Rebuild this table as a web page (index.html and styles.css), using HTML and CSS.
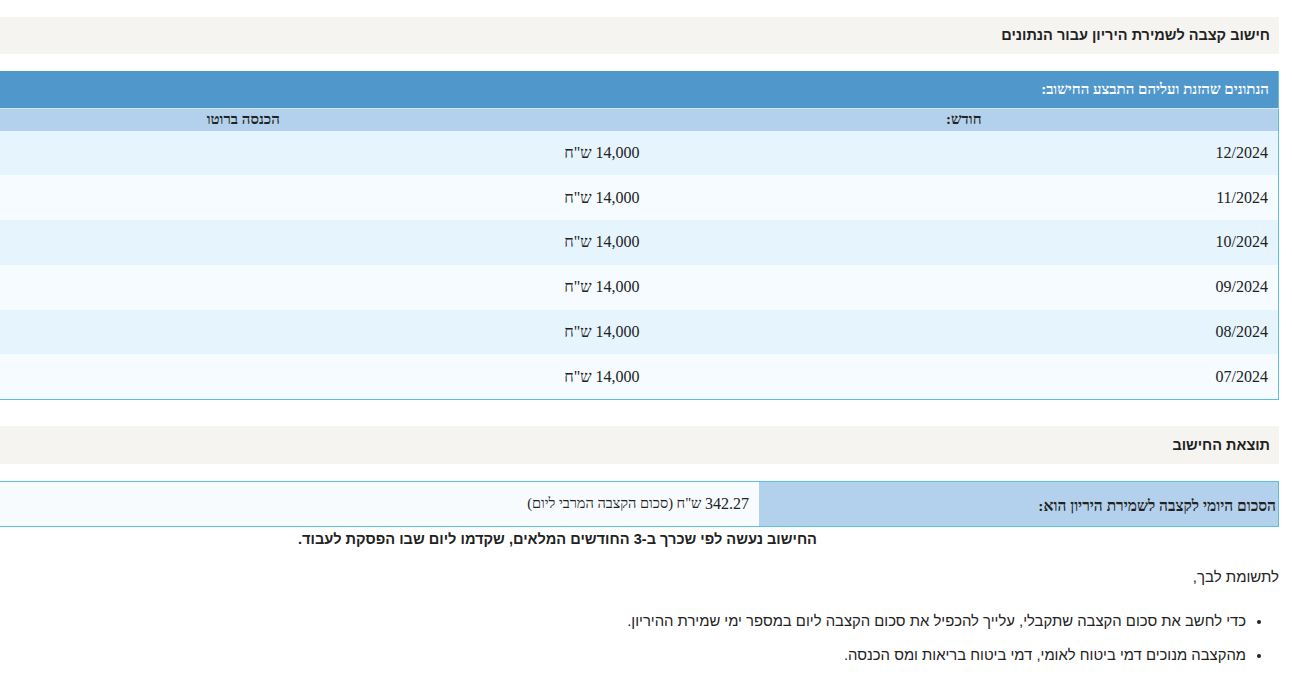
FILE: index.html
```html
<!DOCTYPE html>
<html lang="he" dir="rtl">
<head>
<meta charset="utf-8">
<title>חישוב קצבה לשמירת היריון</title>
<link rel="stylesheet" href="styles.css">
</head>
<body>
<div class="page">
  <h2 class="section-bar">חישוב קצבה לשמירת היריון עבור הנתונים</h2>

  <table class="data-table">
    <colgroup>
      <col class="col-month">
      <col class="col-income">
    </colgroup>
    <thead>
      <tr class="caption-row"><th colspan="2">הנתונים שהזנת ועליהם התבצע החישוב:</th></tr>
      <tr class="head-row"><th>חודש:</th><th>הכנסה ברוטו</th></tr>
    </thead>
    <tbody>
      <tr class="odd"><td>12/2024</td><td>14,000 ש"ח</td></tr>
      <tr class="even"><td>11/2024</td><td>14,000 ש"ח</td></tr>
      <tr class="odd"><td>10/2024</td><td>14,000 ש"ח</td></tr>
      <tr class="even"><td>09/2024</td><td>14,000 ש"ח</td></tr>
      <tr class="odd"><td>08/2024</td><td>14,000 ש"ח</td></tr>
      <tr class="even"><td>07/2024</td><td>14,000 ש"ח</td></tr>
    </tbody>
  </table>

  <h2 class="section-bar result-bar">תוצאת החישוב</h2>

  <div class="result-row">
    <div class="result-label">הסכום היומי לקצבה לשמירת היריון הוא:</div>
    <div class="result-value"><span class="amount">342.27</span>&nbsp;ש"ח (סכום הקצבה המרבי ליום)</div>
  </div>

  <p class="note">החישוב נעשה לפי שכרך ב-3 החודשים המלאים, שקדמו ליום שבו הפסקת לעבוד.</p>

  <div class="attention">
    <p class="attention-title">לתשומת לבך,</p>
    <ul class="attention-list">
      <li>כדי לחשב את סכום הקצבה שתקבלי, עלייך להכפיל את סכום הקצבה ליום במספר ימי שמירת ההיריון.</li>
      <li>מהקצבה מנוכים דמי ביטוח לאומי, דמי ביטוח בריאות ומס הכנסה.</li>
    </ul>
  </div>
</div>
</body>
</html>
```

FILE: styles.css
```css
html, body {
  margin: 0;
  padding: 0;
  background: #ffffff;
}

body {
  direction: rtl;
  font-family: "Liberation Sans", Arial, sans-serif;
  color: #222222;
  overflow: hidden;
}

.page {
  width: 1443px;
  margin: 17px 13px 0 0;
}

.section-bar {
  margin: 0;
  height: 37px;
  line-height: 37px;
  padding: 0 9px 0 0;
  background: #f5f4f0;
  font-size: 14.5px;
  font-weight: bold;
  color: #222222;
}

.result-bar {
  height: 38px;
  line-height: 38px;
  margin-top: 26px;
}

.data-table {
  width: 100%;
  margin-top: 17px;
  border-collapse: collapse;
  border: 1px solid #5bc0de;
  border-top: 0;
  font-family: "Liberation Serif", "Times New Roman", serif;
  table-layout: fixed;
}

.col-month { width: 629px; }
.col-income { width: auto; }

.caption-row th {
  background: #5098cc;
  color: #ffffff;
  height: 37px;
  padding: 0 9px 0 0;
  text-align: right;
  font-size: 15px;
  font-weight: bold;
}

.head-row th {
  background: #b3d1ec;
  height: 22px;
  padding: 0;
  font-size: 15px;
  font-weight: bold;
  color: #222222;
  text-align: center;
  border-top: 1px solid #d6e7f5;
  box-sizing: border-box;
}

.data-table td {
  height: 44.8px;
  padding: 0 10px 0 0;
  font-size: 16px;
  color: #222222;
  text-align: right;
  vertical-align: middle;
  box-sizing: border-box;
}

.odd td { background: #e6f4fd; }
.even td { background: #f5fbfe; }

.result-row {
  display: flex;
  margin-top: 17px;
  height: 46px;
  border: 1px solid #5bc0de;
  border-left: 0;
  box-sizing: border-box;
}

.result-label {
  width: 517px;
  background: #b3d1ec;
  display: flex;
  align-items: center;
  padding: 4px 2px 0 0;
  font-family: "Liberation Serif", "Times New Roman", serif;
  font-size: 15.5px;
  font-weight: bold;
  color: #222222;
}

.result-value {
  flex: 1;
  background: #f7fbfe;
  display: flex;
  align-items: center;
  padding: 0 10px 0 0;
  font-family: "Liberation Serif", "Times New Roman", serif;
  font-size: 14.5px;
  color: #222222;
}

.amount {
  font-size: 16px;
}

.note {
  margin: 3px 0 0 0;
  text-align: center;
  font-size: 14.6px;
  font-weight: bold;
  line-height: 18px;
  color: #222222;
}

.attention {
  margin-top: 20px;
}

.attention-title {
  margin: 0;
  font-size: 15px;
  line-height: 18px;
  color: #222222;
}

.attention-list {
  margin: 26px 0 0 0;
  padding: 0 33px 0 0;
  font-size: 14.85px;
  line-height: 18px;
  color: #222222;
}

.attention-list li {
  margin-bottom: 16px;
}
```
